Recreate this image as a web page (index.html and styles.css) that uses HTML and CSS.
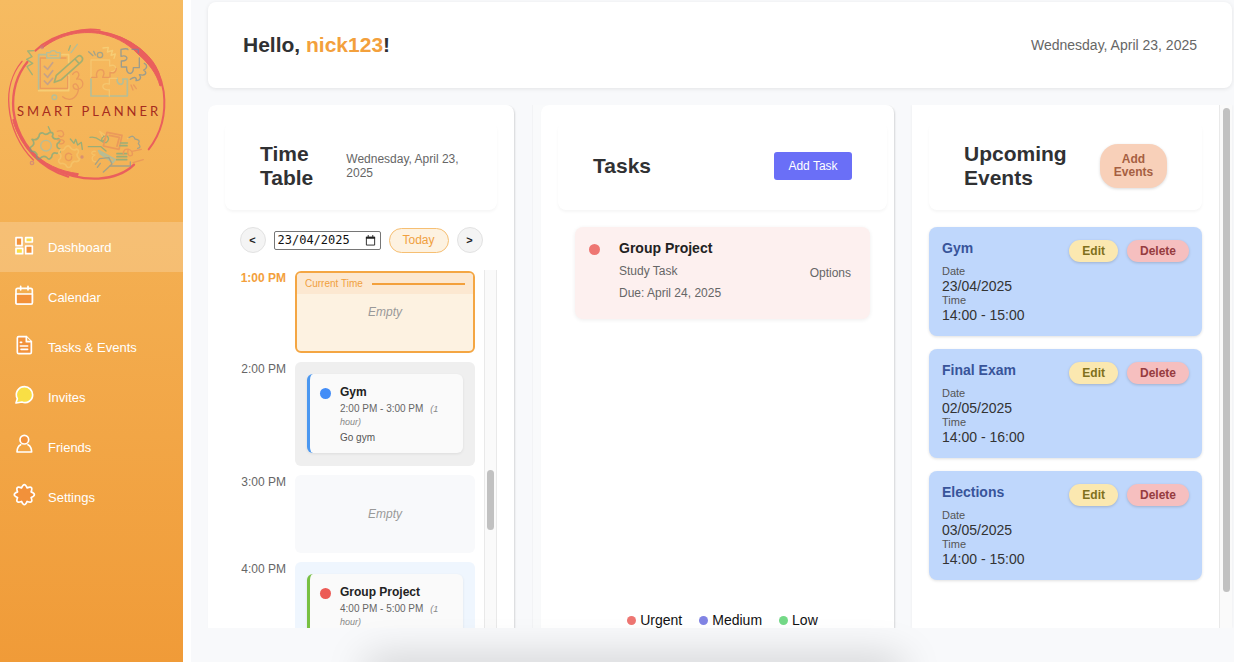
FILE: index.html
```html
<!DOCTYPE html>
<html lang="en">
<head>
<meta charset="utf-8">
<title>Smart Planner</title>
<link rel="stylesheet" href="styles.css">
</head>
<body>
<div class="app">
  <aside class="sidebar">
    <svg class="logo" viewBox="0 48 549 480" fill="none" stroke-linecap="round" stroke-linejoin="round" role="img" aria-label="Smart Planner">
      <g stroke="#ea5f5d">
        <path stroke-width="6" d="M106 122C165 65 260 50 330 72C420 98 478 160 491 245C500 320 480 375 446 418"/>
        <path stroke-width="4" d="M126 112C180 66 250 52 300 60"/>
        <path stroke-width="4" d="M66 154C36 190 22 240 27 290C32 350 58 410 100 450"/>
        <path stroke-width="7" d="M82 156C46 200 36 245 40 300C48 370 90 440 160 476C250 520 350 515 402 464"/>
        <path stroke-width="6" d="M40 330C64 410 120 475 205 500"/>
      </g>
      <g fill="#ea5f5d" stroke="#ea5f5d" stroke-width="3">
        <path d="M130 112C180 74 240 62 296 70C340 78 380 96 414 132C446 160 470 190 480 228L485 226C480 170 445 130 400 102C350 68 290 60 240 64C190 70 155 88 130 112Z"/>
        <path d="M42 340C60 400 110 460 170 480C195 490 215 494 232 498L235 491C180 484 130 462 92 420C66 390 52 365 42 340Z"/>
      </g>
      <g stroke-width="4" opacity=".62">
        <path stroke="#6fae86" d="M101 122L83 123L96 140L80 148L98 160L81 170L97 194"/>
        <path stroke="#8fc3bd" stroke-width="5" d="M136 134H116V238"/>
        <path stroke="#f8db84" stroke-width="5" d="M186 134H206V158M116 242H206V196"/>
        <path stroke="#e58a5c" d="M138 144H121V235H203V198M180 144H198"/>
        <path stroke="#8fc3bd" d="M140 128H150Q152 122 160 122Q168 122 169 128H180V144H140ZM150 136H170"/>
        <path stroke="#aa96a2" stroke-width="5" d="M133 169L143 178L158 158M133 192L143 202L158 182M133 213L143 223L158 205"/>
        <path stroke="#71ab7d" stroke-width="5" d="M163 217L169 196L231 141Q240 132 247 143Q250 151 242 157L184 209ZM225 147L237 160"/>
        <path stroke="#6fae86" d="M206 121L211 107"/><path stroke="#8fc3bd" d="M213 128L232 103"/>
        <path stroke="#e58a5c" d="M218 193C229 175 245 191 230 207C254 204 254 235 233 238C218 239 214 220 228 222C244 234 231 266 208 268Q196 268 188 260"/>
        <circle stroke="#8fc3bd" cx="163" cy="262" r="7"/><circle stroke="#c77983" fill="#c77983" cx="126" cy="112" r="4"/>
        <path stroke="#7697a2" d="M266 125L279 137M281 124L286 135"/><circle stroke="#7697a2" cx="300" cy="135" r="8"/>
        <path stroke="#f8db84" d="M309 114L325 112L322 126L338 121L333 136L346 132L342 145"/>
        <path stroke="#f6d17c" d="M273 202V150H329V168C348 158 356 184 333 185"/>
        <path stroke="#e58a5c" d="M275 202H291C282 178 313 170 312 191Q311 196 308 202H330V187Q348 193 349 175"/>
        <path stroke="#8fc3bd" stroke-width="5" d="M273 207V258H382V207H368C377 229 347 228 352 205"/>
        <path stroke="#f6d17c" d="M328 258V239C304 244 300 215 328 222V205H351"/>
        <path stroke="#668caa" d="M384 119Q383 114 363 118V139C384 132 389 154 364 153V171H380C377 195 401 198 400 173H418V144M396 118H415V128"/>
        <path stroke="#668caa" d="M391 208C404 198 411 203 408 212C423 210 424 202 418 194C436 198 444 190 431 180C443 175 442 164 433 160"/>
        <path stroke="#e58a5c" d="M393 225L399 240M401 225L409 236"/>
        <path stroke="#65aa8a" stroke-width="5" d="M96 388Q111 393 117 379Q118 367 129 369Q138 378 149 367Q164 366 157 379Q162 390 176 386Q185 393 172 401Q167 413 180 417Q184 430 170 430Q157 425 155 441Q147 453 140 442Q129 434 119 447Q107 449 111 433Q104 422 94 424Q86 412 98 407Q106 400 96 388Z"/>
        <circle stroke="#8fc3bd" stroke-width="4" cx="138" cy="407" r="16"/>
        <path stroke="#f6cb71" stroke-width="5" d="M181 419Q193 423 196 412Q206 402 212 414Q221 424 230 417Q241 422 231 433Q231 442 239 447Q235 458 223 454Q213 459 213 469Q202 478 197 464Q189 458 181 461Q170 452 181 445Q186 434 176 429Z"/>
        <path stroke="#e58a5c" d="M215 434Q205 425 197 435Q193 449 206 452Q216 450 215 440M172 364Q189 357 191 373Q188 385 176 377M174 390Q190 386 193 395Q189 404 178 401"/>
        <path stroke="#65aa8a" d="M211 387L222 400L227 388L233 405L244 397L247 418M151 364L145 350"/>
        <circle stroke="#c77983" cx="246" cy="441" r="3"/><circle stroke="#c77983" cx="96" cy="459" r="5"/>
        <path stroke="#65aa8a" d="M270 382C295 376 302 400 318 398C334 386 319 368 308 382C299 394 312 397 316 385M265 410H303L318 423"/>
        <path stroke="#e58a5c" stroke-width="5" d="M321 367L366 376L357 418L310 408ZM328 376L358 382L351 409"/>
        <path stroke="#f6cb71" d="M314 375L299 364L307 379M286 424C272 422 272 435 285 435C270 441 278 458 287 455M382 386Q395 376 402 380"/>
        <path stroke="#8fc3bd" stroke-width="6" d="M296 422L345 449L339 457L300 430Z"/>
        <path stroke="#7697a2" d="M286 463L299 446L327 443L336 462L320 477L310 486M292 472L301 460"/>
        <path stroke="#65aa8a" stroke-width="5" d="M362 399H382M360 407H381M351 431H381M351 440H380M350 449H380"/>
        <path stroke="#e58a5c" d="M370 432C368 410 400 414 397 435C388 442 381 434 384 420M396 424L424 418M399 458L430 449"/>
        <path stroke="#7697a2" d="M387 383Q401 373 405 387Q423 389 415 401Q426 413 413 415M391 456V468H330"/>
      </g>
      <text class="wordmark" x="51" y="319">SMART PLANNER</text>
    </svg>
    <nav class="nav">
      <a class="nav-item active" href="#">
        <svg class="icon" viewBox="0 0 60 60"><path fill="#f2913a" d="M6 2h18v24H6zM35 27h20v23H35z"/><path fill="#f9df45" d="M35 2h20v13H35zM6 34h20v16H6z"/></svg>
        Dashboard</a>
      <a class="nav-item" href="#">
        <svg class="icon" viewBox="0 0 60 60"><rect x="6" y="4" width="49" height="47" rx="5"/><path fill="#f2913a" d="M6 21h49v26q0 4-4 4H10q-4 0-4-4z"/><path d="M20-2v11M42-2v11"/></svg>
        Calendar</a>
      <a class="nav-item" href="#">
        <svg class="icon" viewBox="0 0 60 60"><path fill="#f2913a" d="M14-1h23l15 15v32q0 4-4 4H14q-4 0-4-4V3q0-4 4-4z"/><path fill="#f5ad4d" d="M37-1v15h15M19 16h4M19 27h22M21 37h20"/></svg>
        Tasks &amp; Events</a>
      <a class="nav-item" href="#">
        <svg class="icon" viewBox="0 0 60 60"><path fill="#f9df45" d="M6 48L10 35C1 18 13-1 32-1C45-1 56 10 56 23C56 40 40 51 24 45Z"/></svg>
        Invites</a>
      <a class="nav-item" href="#">
        <svg class="icon" viewBox="0 0 60 60"><circle cx="31" cy="8" r="13" fill="#f2913a"/><path d="M20 23Q9 29 9 45H53Q53 29 42 23"/></svg>
        Friends</a>
      <a class="nav-item" href="#">
        <svg class="icon" viewBox="0 0 60 60"><path fill="#f2913a" d="M51.3 14.6Q71 23 51.3 31.4Q59 51 39.4 43.3Q31 63 22.6 43.3Q3 51 10.7 31.4Q-9 23 10.7 14.6Q3-5 22.6 2.7Q31-17 39.4 2.7Q59-5 51.3 14.6Z"/></svg>
        Settings</a>
    </nav>
  </aside>

  <main class="main">
    <header class="card welcome">
      <h1 class="title">Hello, <span class="user">nick123</span>!</h1>
      <span class="today-date">Wednesday, April 23, 2025</span>
    </header>

    <div class="columns">
      <section class="panel timetable">
        <div class="card panel-head">
          <h2 class="title">Time Table</h2>
          <span class="small-date">Wednesday, April 23, 2025</span>
        </div>
        <div class="controls">
          <button class="round" type="button" aria-label="Previous day">&lt;</button>
          <label class="date-field">
            <input class="date-input" type="text" value="23/04/2025" aria-label="Date">
            <svg class="date-icon" viewBox="0 0 12 12"><path d="M1.500 2.500h9v8.500h-9z" fill="none" stroke="#222"/><path d="M1 2h10v2H1zM3 0h1v2H3zM8 0h1v2H8z" fill="#222"/></svg>
          </label>
          <button class="today" type="button">Today</button>
          <button class="round" type="button" aria-label="Next day">&gt;</button>
        </div>
        <div class="scroller">
          <div class="slots">
            <div class="row">
              <span class="hour now">1:00 PM</span>
              <div class="slot current"><div class="now-bar">Current Time<span class="now-line"></span></div>Empty</div>
            </div>
            <div class="row">
              <span class="hour">2:00 PM</span>
              <div class="slot busy">
                <article class="entry blue">
                  <span class="dot blue-dot"></span>
                  <div><h3 class="entry-title">Gym</h3>
                  <p class="entry-time">2:00 PM - 3:00 PM <em class="length">(1 hour)</em></p>
                  <p class="entry-note">Go gym</p></div>
                </article>
              </div>
            </div>
            <div class="row">
              <span class="hour">3:00 PM</span>
              <div class="slot">Empty</div>
            </div>
            <div class="row">
              <span class="hour">4:00 PM</span>
              <div class="slot busy task-slot">
                <article class="entry green">
                  <span class="dot red-dot"></span>
                  <div><h3 class="entry-title">Group Project</h3>
                  <p class="entry-time">4:00 PM - 5:00 PM <em class="length">(1 hour)</em></p></div>
                </article>
              </div>
            </div>
          </div>
          <div class="track day-track"><div class="thumb"></div></div>
        </div>
      </section>

      <div class="tasks-wrap">
        <section class="panel tasks">
          <div class="card panel-head">
            <h2 class="title">Tasks</h2>
            <button class="add-task" type="button">Add Task</button>
          </div>
          <article class="task">
            <span class="dot urgent"></span>
            <div class="task-text">
              <h3 class="task-title">Group Project</h3>
              <p class="task-line">Study Task</p>
              <p class="task-line">Due: April 24, 2025</p>
            </div>
            <button class="options" type="button">Options</button>
          </article>
          <div class="legend">
            <span class="key"><i class="key-dot urgent"></i>Urgent</span>
            <span class="key"><i class="key-dot medium"></i>Medium</span>
            <span class="key"><i class="key-dot low"></i>Low</span>
          </div>
        </section>
      </div>

      <div class="events-wrap">
        <section class="panel events">
          <div class="card panel-head">
            <h2 class="title">Upcoming Events</h2>
            <button class="add-events" type="button">Add Events</button>
          </div>
          <div class="event-list">
            <article class="event">
              <div><h3 class="event-title">Gym</h3>
                <dl class="facts"><dt>Date</dt><dd>23/04/2025</dd><dt>Time</dt><dd>14:00 - 15:00</dd></dl></div>
              <div class="actions"><button class="pill edit" type="button">Edit</button><button class="pill delete" type="button">Delete</button></div>
            </article>
            <article class="event">
              <div><h3 class="event-title">Final Exam</h3>
                <dl class="facts"><dt>Date</dt><dd>02/05/2025</dd><dt>Time</dt><dd>14:00 - 16:00</dd></dl></div>
              <div class="actions"><button class="pill edit" type="button">Edit</button><button class="pill delete" type="button">Delete</button></div>
            </article>
            <article class="event">
              <div><h3 class="event-title">Elections</h3>
                <dl class="facts"><dt>Date</dt><dd>03/05/2025</dd><dt>Time</dt><dd>14:00 - 15:00</dd></dl></div>
              <div class="actions"><button class="pill edit" type="button">Edit</button><button class="pill delete" type="button">Delete</button></div>
            </article>
          </div>
        </section>
        <div class="track page-track"><div class="thumb"></div></div>
      </div>
    </div>
    <div class="dock-shadow"></div>
  </main>
</div>
</body>
</html>
```
FILE: styles.css
```css
* { box-sizing: border-box; }
body, h1, h2, h3, p, dl, dd { margin: 0; }
body {
  background: #fff;
  color: #333;
  font-family: "Liberation Sans", Arial, sans-serif;
  font-size: 12px;
}
button, input { font: inherit; margin: 0; padding: 0; border: 0; }
button { cursor: pointer; }

.app { display: flex; gap: 8px; height: 100vh; overflow: hidden; }

/* Sidebar */
.sidebar {
  flex: 0 0 183px;
  padding-top: 26px;
  background: linear-gradient(#f6bb61, #f09b38);
}
.logo { display: block; width: 100%; height: auto; margin-bottom: 36px; }
.wordmark {
  font-family: Lato, sans-serif;
  font-size: 39px;
  letter-spacing: 9px;
  fill: #a62c20;
  stroke: none;
}
.nav-item {
  display: flex;
  align-items: center;
  gap: 14px;
  height: 50px;
  padding: 0 14px;
  color: #fff;
  font-size: 13px;
  text-decoration: none;
}
.nav-item.active { background: rgba(255, 255, 255, .2); }
.icon {
  width: 20px;
  height: 20px;
  overflow: visible;
  fill: none;
  stroke: #fff;
  stroke-width: 5px;
  stroke-linecap: round;
  stroke-linejoin: round;
}

/* Main area */
.main {
  position: relative;
  flex: 1;
  min-width: 0;
  display: flex;
  flex-direction: column;
  gap: 17px;
  padding: 2px 2px 34px 17px;
  background: #f8f9fb;
  overflow: hidden;
}
.card {
  display: flex;
  align-items: center;
  justify-content: space-between;
  padding: 0 35px;
  background: #fff;
  border-radius: 8px;
}
.welcome { flex: 0 0 86px; box-shadow: 0 1px 4px rgba(0, 0, 0, .09); }
.title { font-size: 21px; line-height: 24px; color: #303133; }
.user { color: #f3a03c; }
.today-date { font-size: 14px; color: #666; }

.columns {
  flex: 1;
  min-height: 0;
  display: grid;
  grid-template-columns: 306fr 362fr 320fr;
  gap: 18px;
  overflow-y: clip;
}
.panel {
  display: flex;
  flex-direction: column;
  gap: 17px;
  min-width: 0;
  min-height: 0;
  padding: 17px 17px 0;
  background: #fff;
  border-radius: 8px 8px 0 0;
}
.timetable, .tasks { box-shadow: 1px 1px 2px rgba(0, 0, 0, .14); }
.panel-head { flex: 0 0 88px; box-shadow: 0 2px 3px rgba(0, 0, 0, .04); }

/* Timetable */
.timetable .panel-head { gap: 33px; }
.timetable .title { width: min-content; }
.small-date { flex: 1; line-height: 14px; color: #666; }
.controls { display: flex; align-items: center; justify-content: center; gap: 8px; }
.round {
  width: 26px;
  height: 26px;
  border: 1px solid #e2e2e2;
  border-radius: 50%;
  background: #f4f4f4;
  color: #222;
  font-weight: bold;
  font-size: 11px;
}
.date-field {
  display: flex;
  align-items: center;
  width: 107px;
  height: 19px;
  padding: 0 4px 0 3px;
  border: 1px solid #767676;
  border-radius: 2px;
  background: #fff;
}
.date-input {
  flex: 1;
  min-width: 0;
  height: 15px;
  background: none;
  color: #111;
  font-family: "DejaVu Sans Mono", monospace;
}
.date-icon { width: 11px; height: 11px; }
.today {
  width: 60px;
  height: 25px;
  border: 1px solid #f6bf73;
  border-radius: 13px;
  background: #fdf2e1;
  color: #f0a040;
}
.scroller { flex: 1; min-height: 0; display: flex; gap: 9px; padding-left: 15px; }
.slots {
  flex: 1;
  display: flex;
  flex-direction: column;
  gap: 9px;
  padding-top: 1px;
  overflow: hidden;
}
.row { flex: none; display: flex; gap: 9px; }
.hour { width: 46px; text-align: right; line-height: 14px; color: #666; white-space: nowrap; }
.hour.now { color: #f3a03c; font-weight: bold; }
.slot {
  position: relative;
  flex: 1;
  display: flex;
  align-items: center;
  justify-content: center;
  height: 78px;
  border-radius: 6px;
  background: #f8f9fb;
  color: #999;
  font-style: italic;
  overflow: hidden;
}
.slot.current { height: 82px; border: 2px solid #f4a643; background: #fdf2e1; }
.now-bar {
  position: absolute;
  inset: 0 0 auto;
  display: flex;
  align-items: center;
  gap: 9px;
  height: 21px;
  padding: 0 8px;
  background: #fce8d1;
  color: #f0a040;
  font-size: 10px;
  font-style: normal;
}
.now-line { flex: 1; height: 2px; background: #f3a03c; }
.slot.busy {
  height: auto;
  padding: 12px 12px 13px;
  background: #efefef;
  font-style: normal;
}
.slot.task-slot { background: #eff6fe; }
.entry {
  flex: 1;
  display: flex;
  gap: 9px;
  min-height: 79px;
  padding: 11px 10px 9px;
  border-left: 3px solid;
  border-radius: 6px;
  background: #fafafa;
  box-shadow: 0 1px 3px rgba(0, 0, 0, .08);
}
.entry.blue { border-color: #4a97f0; }
.entry.green { border-color: #77c043; }
.dot { flex: none; width: 11px; height: 11px; margin-top: 3px; border-radius: 50%; }
.blue-dot { background: #438df7; }
.red-dot { background: #ec5b56; }
.entry-title { margin-bottom: 3px; font-size: 12px; line-height: 14px; color: #222; }
.entry-time { font-size: 10px; line-height: 13px; color: #666; }
.length { margin-left: 4px; font-size: 9px; line-height: 9px; color: #888; }
.entry-note { margin-top: 3px; font-size: 10px; line-height: 13px; color: #555; }

.track {
  display: flex;
  flex-direction: column;
  align-items: center;
  width: 13px;
  background: #fafafa;
  border: solid #e9e9e9;
  border-width: 0 1px;
}
.thumb { width: 7px; border-radius: 4px; background: #c1c1c1; }
.day-track { padding-top: 200px; }
.day-track .thumb { height: 60px; }

/* Tasks */
.tasks-wrap { display: grid; min-width: 0; min-height: 0; padding-left: 8px; border-left: 1px solid #f2f3f5; background: #f9fafb; }
.tasks { padding-right: 7px; }
.add-task { width: 78px; height: 28px; border-radius: 3px; background: #6a6ff7; color: #fff; }
.task {
  display: flex;
  gap: 19px;
  min-height: 92px;
  margin: 0 17px;
  padding: 13px 19px 13px 14px;
  border-radius: 8px;
  background: #fdf0ef;
  box-shadow: 0 1px 4px rgba(0, 0, 0, .07);
}
.task .dot { margin-top: 4px; }
.task-text { flex: 1; }
.task-title { font-size: 14px; line-height: 16px; color: #222; }
.task-line { margin-top: 8px; line-height: 14px; color: #666; }
.options { align-self: center; background: none; color: #666; }
.urgent { background: #ee7672; }
.medium { background: #8184e4; }
.low { background: #74d987; }
.legend {
  display: flex;
  justify-content: center;
  gap: 17px;
  margin-top: auto;
  font-size: 14px;
  line-height: 16px;
  color: #111;
}
.key { display: flex; align-items: center; gap: 4px; }
.key-dot { width: 9px; height: 9px; border-radius: 50%; }

/* Events */
.events-wrap { display: flex; min-width: 0; min-height: 0; box-shadow: 0 0 3px rgba(0, 0, 0, .06); }
.events { flex: 1; border-radius: 0; }
.add-events {
  flex: none;
  width: 67px;
  height: 44px;
  padding: 0 12px;
  border-radius: 18px;
  background: #f8d0b9;
  color: #a65f42;
  font-weight: bold;
  line-height: 13px;
  box-shadow: 0 1px 3px rgba(0, 0, 0, .15);
}
.events .panel-head { gap: 20px; }
.event-list { display: flex; flex-direction: column; gap: 13px; }
.event {
  display: flex;
  justify-content: space-between;
  min-height: 109px;
  padding: 13px;
  border-radius: 8px;
  background: #bfd7fc;
  box-shadow: 0 1px 3px rgba(0, 0, 0, .12);
}
.event-title { margin-bottom: 8px; font-size: 14px; line-height: 17px; color: #38549a; }
.facts dt { font-size: 11px; line-height: 13px; color: #555; }
.facts dd { font-size: 14px; line-height: 16px; color: #333; }
.actions { display: flex; align-items: flex-start; gap: 9px; }
.pill {
  height: 22px;
  padding: 0 13px;
  border-radius: 11px;
  font-weight: bold;
  box-shadow: 0 1px 3px rgba(0, 0, 0, .18);
}
.edit { background: #fbe8b0; color: #80701c; }
.delete { background: #f6bfbf; color: #963c40; }
.page-track { padding-top: 3px; border-width: 0 0 0 1px; }
.page-track .thumb { height: 93%; }

/* Soft shade rising from the bottom edge */
.dock-shadow {
  position: absolute;
  left: 17%;
  right: 32%;
  bottom: -20px;
  height: 20px;
  box-shadow: 0 0 40px 2px rgba(0, 0, 0, .22);
}
```
